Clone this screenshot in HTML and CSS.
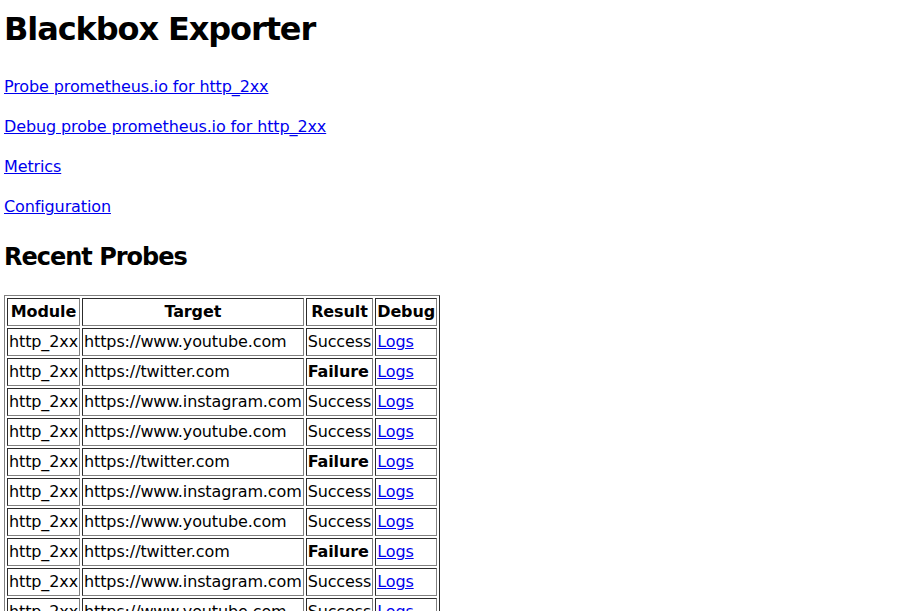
FILE: index.html
```html
<!DOCTYPE html>
<html>
<head>
<meta charset="utf-8">
<title>Blackbox Exporter</title>
<link rel="stylesheet" href="styles.css">
</head>
<body>
<h1 class="title">Blackbox Exporter</h1>
<p class="nav"><a href="#">Probe prometheus.io for http_2xx</a></p>
<p class="nav"><a href="#">Debug probe prometheus.io for http_2xx</a></p>
<p class="nav"><a href="#">Metrics</a></p>
<p class="nav"><a href="#">Configuration</a></p>
<h2 class="section">Recent Probes</h2>
<table class="probes">
<tr><th>Module</th><th>Target</th><th>Result</th><th>Debug</th></tr>
<tr><td>http_2xx</td><td>https://www.youtube.com</td><td>Success</td><td><a href="#">Logs</a></td></tr>
<tr><td>http_2xx</td><td>https://twitter.com</td><td><strong>Failure</strong></td><td><a href="#">Logs</a></td></tr>
<tr><td>http_2xx</td><td>https://www.instagram.com</td><td>Success</td><td><a href="#">Logs</a></td></tr>
<tr><td>http_2xx</td><td>https://www.youtube.com</td><td>Success</td><td><a href="#">Logs</a></td></tr>
<tr><td>http_2xx</td><td>https://twitter.com</td><td><strong>Failure</strong></td><td><a href="#">Logs</a></td></tr>
<tr><td>http_2xx</td><td>https://www.instagram.com</td><td>Success</td><td><a href="#">Logs</a></td></tr>
<tr><td>http_2xx</td><td>https://www.youtube.com</td><td>Success</td><td><a href="#">Logs</a></td></tr>
<tr><td>http_2xx</td><td>https://twitter.com</td><td><strong>Failure</strong></td><td><a href="#">Logs</a></td></tr>
<tr><td>http_2xx</td><td>https://www.instagram.com</td><td>Success</td><td><a href="#">Logs</a></td></tr>
<tr><td>http_2xx</td><td>https://www.youtube.com</td><td>Success</td><td><a href="#">Logs</a></td></tr>
<tr><td>http_2xx</td><td>https://twitter.com</td><td><strong>Failure</strong></td><td><a href="#">Logs</a></td></tr>
<tr><td>http_2xx</td><td>https://www.instagram.com</td><td>Success</td><td><a href="#">Logs</a></td></tr>
<tr><td>http_2xx</td><td>https://www.youtube.com</td><td>Success</td><td><a href="#">Logs</a></td></tr>
<tr><td>http_2xx</td><td>https://twitter.com</td><td><strong>Failure</strong></td><td><a href="#">Logs</a></td></tr>
<tr><td>http_2xx</td><td>https://www.instagram.com</td><td>Success</td><td><a href="#">Logs</a></td></tr>
<tr><td>http_2xx</td><td>https://www.youtube.com</td><td>Success</td><td><a href="#">Logs</a></td></tr>
<tr><td>http_2xx</td><td>https://twitter.com</td><td><strong>Failure</strong></td><td><a href="#">Logs</a></td></tr>
<tr><td>http_2xx</td><td>https://www.instagram.com</td><td>Success</td><td><a href="#">Logs</a></td></tr>
</table>
</body>
</html>
```
FILE: styles.css
```css
html, body {
  background: #ffffff;
}
body {
  margin: 5px 4px 4px 4px;
  font-family: "DejaVu Sans", Verdana, sans-serif;
  font-size: 16px;
  line-height: 24px;
  letter-spacing: -0.12px;
  color: #000000;
}
a {
  color: #0000ee;
}
.title {
  font-size: 32px;
  line-height: 48px;
  letter-spacing: -1.1px;
  margin: 0 0 22px 0;
}
.nav {
  margin: 16px 0;
}
.section {
  font-size: 24px;
  line-height: 36px;
  letter-spacing: -1px;
  margin: 20px 0;
}
.probes {
  border: 1px outset #808080;
  border-spacing: 2px;
}
.probes th,
.probes td {
  border: 1px inset #808080;
  padding: 1px;
  white-space: nowrap;
}
.probes th {
  text-align: center;
}
```
